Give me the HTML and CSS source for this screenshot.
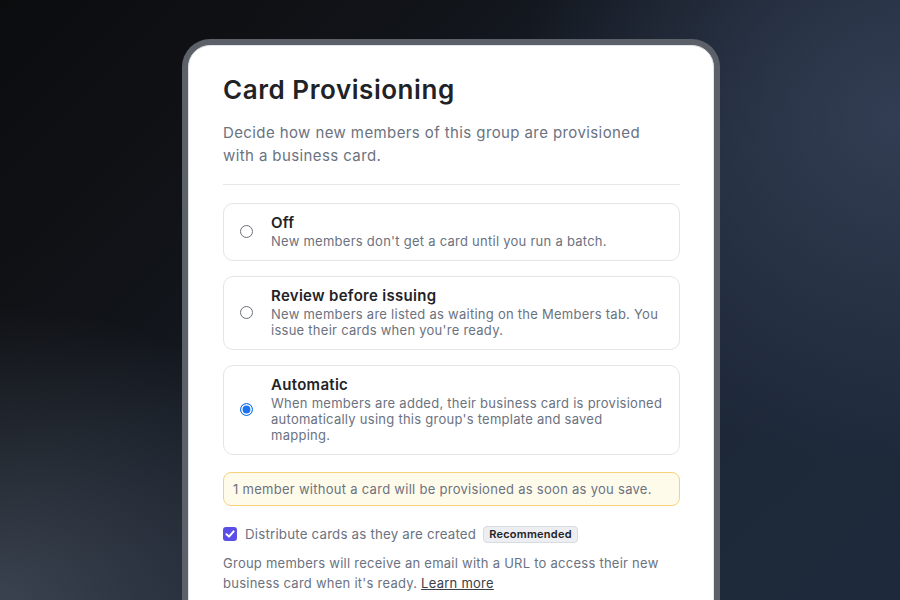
FILE: index.html
```html
<!DOCTYPE html>
<html lang="en">
<head>
<meta charset="utf-8">
<title>Card Provisioning</title>
<link rel="stylesheet" href="styles.css">
</head>
<body>
<main class="stage">
  <div class="frame">
    <section class="card">
      <h1 class="title">Card Provisioning</h1>
      <p class="subtitle">Decide how new members of this group are provisioned with a business card.</p>
      <hr class="divider">
      <div class="options">
        <div class="option">
          <span class="radio"></span>
          <div class="option-text">
            <div class="option-title">Off</div>
            <div class="option-desc">New members don't get a card until you run a batch.</div>
          </div>
        </div>
        <div class="option">
          <span class="radio"></span>
          <div class="option-text">
            <div class="option-title">Review before issuing</div>
            <div class="option-desc">New members are listed as waiting on the Members tab. You issue their cards when you're ready.</div>
          </div>
        </div>
        <div class="option">
          <span class="radio checked"></span>
          <div class="option-text">
            <div class="option-title">Automatic</div>
            <div class="option-desc">When members are added, their business card is provisioned automatically using this group's template and saved mapping.</div>
          </div>
        </div>
      </div>
      <div class="notice">1 member without a card will be provisioned as soon as you save.</div>
      <div class="check-row">
        <span class="checkbox">
          <svg viewBox="0 0 14 14" width="14" height="14"><path d="M3.5 7.2 L6 9.6 L10.6 4.4" fill="none" stroke="#fff" stroke-width="2" stroke-linecap="round" stroke-linejoin="round"/></svg>
        </span>
        <span class="check-label">Distribute cards as they are created</span>
        <span class="badge">Recommended</span>
      </div>
      <p class="help">Group members will receive an email with a URL to access their new business card when it's ready. <a class="link" href="#">Learn more</a></p>
    </section>
  </div>
</main>
</body>
</html>
```
FILE: styles.css
```css
* { box-sizing: border-box; }
html, body { margin: 0; padding: 0; height: 100%; }
body {
  width: 900px;
  height: 600px;
  overflow: hidden;
  font-family: "Inter", "Noto Sans", sans-serif;
  background:
    radial-gradient(ellipse 520px 420px at 0% 100%, rgba(70, 80, 94, 0.75), rgba(70, 80, 94, 0) 70%),
    radial-gradient(ellipse 520px 460px at 100% 20%, rgba(52, 64, 86, 0.9), rgba(52, 64, 86, 0) 75%),
    linear-gradient(135deg, #0b0c0e 0%, #111419 30%, #1c2535 60%, #1e2a3b 100%);
}
.stage {
  display: flex;
  justify-content: center;
  padding-top: 39px;
  padding-left: 2px;
}
.frame {
  width: 538px;
  background: #5c6068;
  padding: 6px 6px 0 6px;
  border-radius: 28px 28px 0 0;
  height: 700px;
}
.card {
  background: #ffffff;
  border: 1px solid #e2e4e8;
  border-radius: 22px 22px 0 0;
  height: 100%;
  padding: 28px 33px 0 34px;
}
.title {
  margin: 0;
  font-size: 26px;
  line-height: 32px;
  font-weight: 600;
  color: #1f2226;
  letter-spacing: 0.55px;
}
.subtitle {
  margin: 15px 0 0 0;
  font-size: 15px;
  line-height: 23px;
  color: #6b7280;
  padding-right: 20px;
  letter-spacing: 0.4px;
}
.divider {
  border: 0;
  border-top: 1px solid #e5e7eb;
  margin: 17px 0 0 0;
  height: 0;
}
.options {
  display: flex;
  flex-direction: column;
  gap: 15px;
  margin-top: 18px;
}
.option {
  display: flex;
  align-items: center;
  gap: 18px;
  border: 1px solid #e3e5e8;
  border-radius: 10px;
  padding: 9px 15px 11px 16px;
}
.radio {
  flex: none;
  width: 13px;
  height: 13px;
  border-radius: 50%;
  border: 1px solid #6b6f76;
  background: #fff;
}
.radio.checked {
  border: 1.5px solid #1a73f0;
  box-shadow: inset 0 0 0 1.6px #fff;
  background: #1a73f0;
}
.option-title {
  font-size: 15px;
  line-height: 20px;
  font-weight: 600;
  color: #1f2226;
  letter-spacing: 0.3px;
}
.option-desc {
  font-size: 13px;
  line-height: 16px;
  color: #6b7280;
  letter-spacing: 0.26px;
}
.notice {
  margin-top: 17px;
  background: #fffbeb;
  border: 1px solid #f6d27c;
  border-radius: 8px;
  padding: 8px 9px;
  font-size: 13px;
  line-height: 16px;
  color: #6b7280;
  letter-spacing: 0.28px;
}
.check-row {
  display: flex;
  align-items: center;
  margin-top: 18px;
  height: 20px;
}
.checkbox {
  flex: none;
  width: 14px;
  height: 14px;
  border-radius: 3px;
  background: #5b4ee6;
  display: flex;
  align-items: center;
  justify-content: center;
  margin-right: 8px;
}
.check-label {
  font-size: 13.3px;
  color: #6b7280;
  margin-right: 7px;
  letter-spacing: 0.2px;
}
.badge {
  font-size: 11px;
  line-height: 15px;
  font-weight: 600;
  color: #1f2226;
  background: #eceef1;
  border: 1px solid #d8dbe0;
  border-radius: 4px;
  padding: 0 5px;
  letter-spacing: 0.25px;
}
.help {
  margin: 9px 0 0 0;
  font-size: 13px;
  line-height: 20px;
  color: #6b7280;
  letter-spacing: 0.25px;
}
.link {
  color: #3b4048;
  text-decoration: underline;
}
```
